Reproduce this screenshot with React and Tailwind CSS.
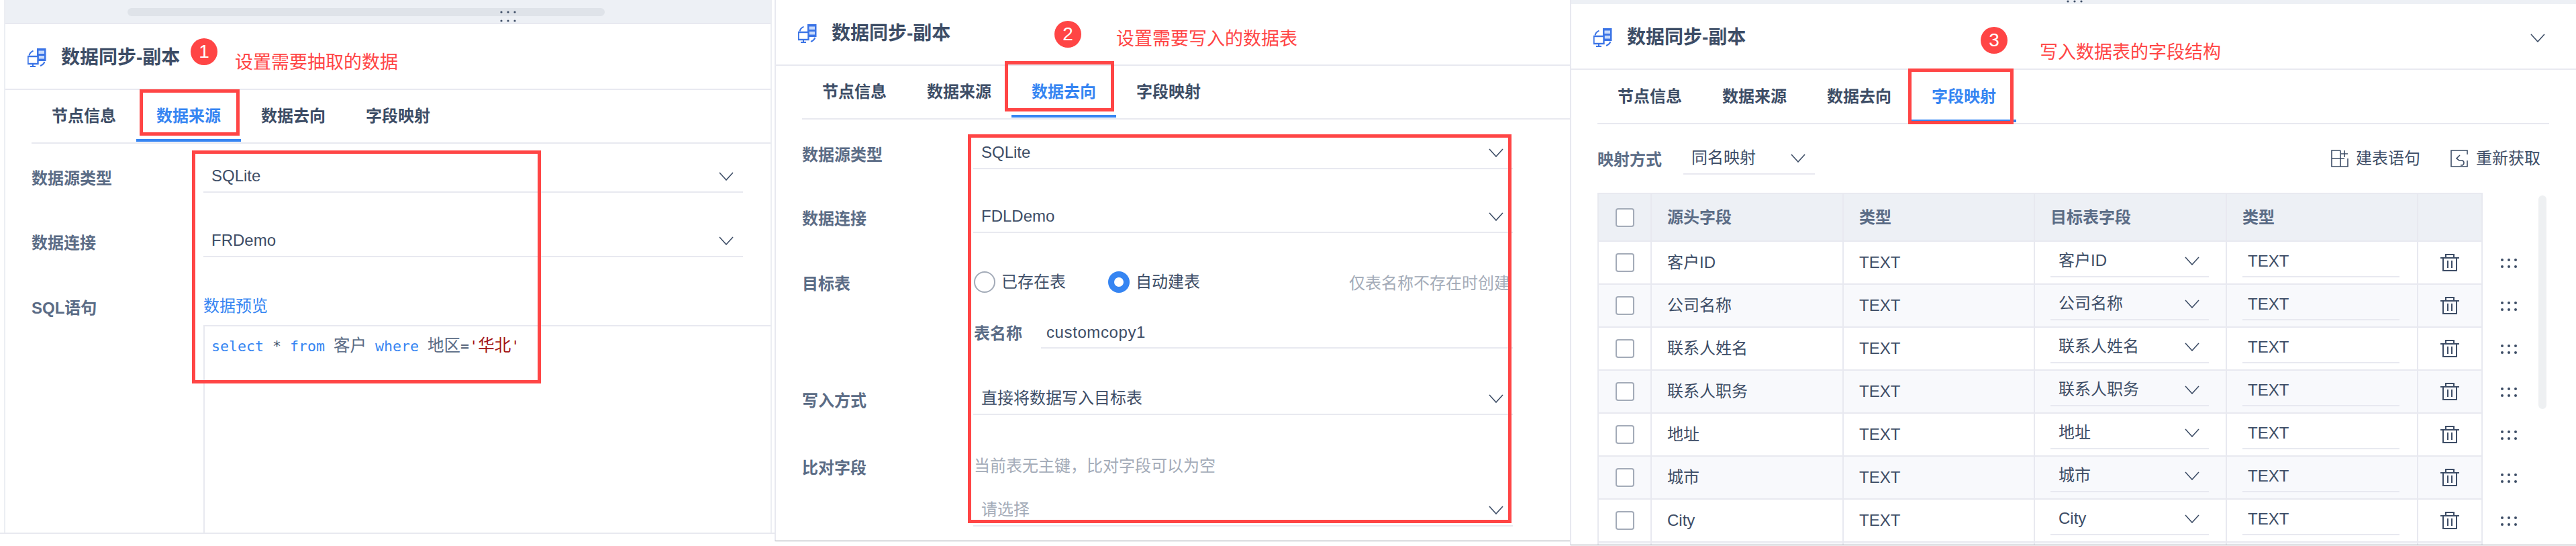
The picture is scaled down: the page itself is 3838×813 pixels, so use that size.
import React from 'react'

const TABS = ['节点信息', '数据来源', '数据去向', '字段映射']

const FIELDS = ['客户ID', '公司名称', '联系人姓名', '联系人职务', '地址', '城市', 'City']

function Chevron() {
  return (
    <svg width="22" height="13" viewBox="0 0 22 13" fill="none" stroke="#3d4d66" strokeWidth="1.6" className="shrink-0">
      <path d="M1 1l10 11L21 1" />
    </svg>
  )
}

function DbIcon() {
  return (
    <svg width="28" height="28" viewBox="0 0 28 28" fill="none" className="shrink-0">
      <path d="M2.5 10.5C3.2 7.5 5.4 5 8.5 3.6" stroke="#3b74e6" strokeWidth="2" />
      <path d="M25.5 20C24.3 22.8 22 25 19 26" stroke="#3b74e6" strokeWidth="2" />
      <rect x="14" y="0" width="13.5" height="19" fill="#3b74e6" />
      <rect x="16.5" y="3.5" width="8.5" height="4.5" fill="#c9dbfb" />
      <rect x="16.5" y="11" width="8.5" height="4.5" fill="#c9dbfb" />
      <rect x="0.5" y="12" width="15" height="11" fill="#fff" stroke="#3b74e6" strokeWidth="2.4" />
      <path d="M4 27h8M8 23v4" stroke="#3b74e6" strokeWidth="2" />
    </svg>
  )
}

function TrashIcon() {
  return (
    <svg width="28" height="26" viewBox="0 0 28 26" fill="none" stroke="#3d4d66" strokeWidth="2">
      <path d="M0 6h28M8 6V1h12v5M4 6v19h20V6M11 10v11M17 10v11" />
    </svg>
  )
}

function DragDots() {
  return (
    <svg width="26" height="14" viewBox="0 0 26 14" fill="#3d4d66" className="ml-[26px] shrink-0">
      <circle cx="3" cy="2" r="2" />
      <circle cx="13" cy="2" r="2" />
      <circle cx="23" cy="2" r="2" />
      <circle cx="3" cy="12" r="2" />
      <circle cx="13" cy="12" r="2" />
      <circle cx="23" cy="12" r="2" />
    </svg>
  )
}

function Grip({ className }) {
  return (
    <svg width="24" height="18" viewBox="0 0 24 18" fill="#3d4d66" className={className}>
      <circle cx="2" cy="2" r="1.6" />
      <circle cx="12" cy="2" r="1.6" />
      <circle cx="22" cy="2" r="1.6" />
      <circle cx="2" cy="15" r="1.6" />
      <circle cx="12" cy="15" r="1.6" />
      <circle cx="22" cy="15" r="1.6" />
    </svg>
  )
}

function Header({ chevron }) {
  return (
    <div className="flex h-[98px] shrink-0 items-center border-b-2 border-[#e8e9f0] pl-[33px] pr-[46px] pt-[4px]">
      <DbIcon />
      <span className="ml-[22px] text-[28px] font-bold leading-none text-[#3d4d66]">数据同步-副本</span>
      {chevron && (
        <span className="ml-auto">
          <Chevron />
        </span>
      )}
    </div>
  )
}

function Tabs({ active, className }) {
  return (
    <div className={`flex shrink-0 border-b-2 border-[#e8e9f0] ${className}`}>
      {TABS.map((t, i) => (
        <div
          key={t}
          className={`relative flex w-[156px] items-center justify-center text-[24px] font-bold leading-none ${
            i === active ? 'text-[#3685f2]' : 'text-[#3d4d66]'
          }`}
        >
          {t}
          {i === active && <span className="absolute bottom-[1px] left-0 h-[4px] w-full bg-[#3685f2]" />}
        </div>
      ))}
    </div>
  )
}

function Select({ value, className = '', placeholder }) {
  return (
    <div className={`flex h-[48px] shrink-0 items-center justify-between border-b-2 border-[#e8e9f0] pl-[12px] pr-[14px] text-[24px] leading-none ${placeholder ? 'text-[#a3abb8]' : 'text-[#3d4d66]'} ${className}`}>
      <span>{value}</span>
      <Chevron />
    </div>
  )
}

function Label({ children, className = 'w-[256px]' }) {
  return (
    <span className={`mt-[5px] shrink-0 text-[24px] font-bold leading-none text-[#5b6c86] ${className}`}>{children}</span>
  )
}

function Cjk({ children }) {
  return <span className="text-[24.5px] text-[#5b6c86]">{children}</span>
}

function SourcePanel() {
  return (
    <div className="h-[795px] w-[1154px] shrink-0 border-b-2 border-[#e8e9f0] pl-[6px] pr-[4px]">
      <div className="flex h-full flex-col border-l-2 border-r-2 border-[#eceef3]">
        <div className="relative flex h-[36px] shrink-0 items-start border-b-2 border-[#e8e9f0] bg-[#edf0f5] pl-[182px] pt-[12px]">
          <div className="h-[12px] w-[711px] rounded-full bg-[#dfe3e9]" />
          <Grip className="absolute left-[737px] top-[16px]" />
        </div>
        <Header />
        <Tabs active={1} className="ml-[39px] h-[80px]" />
        <div className="flex flex-1 flex-col pl-[39px]">
          <div className="mt-[25px] flex items-center">
            <Label>数据源类型</Label>
            <Select value="SQLite" className="w-[804px]" />
          </div>
          <div className="mt-[48px] flex items-center">
            <Label>数据连接</Label>
            <Select value="FRDemo" className="w-[804px]" />
          </div>
          <div className="mt-[56px] flex h-[34px] items-center">
            <Label>SQL语句</Label>
            <span className="text-[24px] leading-none text-[#3685f2]">数据预览</span>
          </div>
          <div className="ml-[256px] mt-[11px] flex-1 border-l-2 border-t-2 border-[#e8e9f0] pl-[10px] pt-[16px] font-['DejaVu_Sans_Mono','Noto_Sans_CJK_SC',monospace] text-[21.6px] leading-[26px] text-[#3d4d66]">
            <span className="text-[#3685f2]">select</span> * <span className="text-[#3685f2]">from</span> <Cjk>客户</Cjk> <span className="text-[#3685f2]">where</span> <Cjk>地区</Cjk>=<span className="text-[#a31515]">'<span className="text-[24.5px]">华北</span>'</span>
          </div>
        </div>
      </div>
    </div>
  )
}

function TargetPanel() {
  return (
    <div className="flex h-[806px] w-[1185px] shrink-0 flex-col border-b border-l-2 border-[#e8e9f0] border-b-[#8a8f99]">
      <Header />
      <Tabs active={2} className="ml-[39px] h-[80px]" />
      <div className="flex flex-col pl-[39px]">
        <div className="mt-[26px] flex items-center">
          <Label className="w-[255px]">数据源类型</Label>
          <Select value="SQLite" className="w-[804px]" />
        </div>
        <div className="mt-[47px] flex items-center">
          <Label className="w-[255px]">数据连接</Label>
          <Select value="FDLDemo" className="w-[804px]" />
        </div>
        <div className="mt-[56px] flex h-[34px] items-center">
          <Label className="w-[255px]">目标表</Label>
          <div className="flex w-[804px] items-center pr-[4px] text-[24px] leading-none text-[#3d4d66]">
            <span className="ml-[1px] h-[32px] w-[32px] rounded-full border-2 border-[#a3abb8]" />
            <span className="ml-[9px]">已存在表</span>
            <span className="ml-[63px] h-[32px] w-[32px] rounded-full border-[9px] border-[#3685f2]" />
            <span className="ml-[9px]">自动建表</span>
            <span className="ml-auto mt-[4px] text-[#a3abb8]">仅表名称不存在时创建</span>
          </div>
        </div>
        <div className="ml-[255px] mt-[34px] flex items-center">
          <span className="mt-[4px] w-[101px] shrink-0 pl-[1px] text-[24px] font-bold leading-none text-[#5b6c86]">表名称</span>
          <div className="flex h-[48px] w-[703px] items-center border-b-2 border-[#e8e9f0] pl-[8px] pt-[2px] text-[24px] leading-none tracking-[0.6px] text-[#3d4d66]">customcopy1</div>
        </div>
        <div className="mt-[51px] flex items-center">
          <Label className="w-[255px]">写入方式</Label>
          <Select value="直接将数据写入目标表" className="w-[804px]" />
        </div>
        <div className="mt-[59px] flex h-[34px] items-center">
          <Label className="w-[255px]">比对字段</Label>
          <span className="pl-[1px] text-[24px] leading-none text-[#a3abb8]">当前表无主键，比对字段可以为空</span>
        </div>
        <Select value="请选择" placeholder className="ml-[255px] mt-[25px] w-[804px]" />
      </div>
    </div>
  )
}

function Cell({ children, className = '' }) {
  return (
    <div className={`flex min-w-0 items-center border-r-2 border-[#e8e9f0] ${className}`}>{children}</div>
  )
}

function Checkbox() {
  return <span className="h-[28px] w-[28px] rounded-[4px] border-2 border-[#a3abb8] bg-white" />
}

function MappingTable() {
  return (
    <div className="mt-[28px] flex flex-col">
      <div className="grid h-[73px] w-[1319px] shrink-0 grid-cols-[79px_286px_285px_286px_285px_96px] border-b-2 border-l-2 border-t-2 border-[#e8e9f0] bg-[#edf0f5] text-[24px] font-bold leading-none text-[#5b6c86]">
        <Cell className="justify-center"><Checkbox /></Cell>
        <Cell className="pl-[23px]">源头字段</Cell>
        <Cell className="pl-[23px]">类型</Cell>
        <Cell className="pl-[23px]">目标表字段</Cell>
        <Cell className="pl-[23px]">类型</Cell>
        <Cell />
      </div>
      {FIELDS.map((f, i) => (
        <div key={f} className="flex h-[64px] shrink-0 items-center">
          <div className={`grid h-full w-[1319px] shrink-0 grid-cols-[79px_286px_285px_286px_285px_96px] border-b-2 border-l-2 border-[#e8e9f0] text-[24px] leading-none text-[#3d4d66] ${i % 2 ? 'bg-[#f8f9fc]' : 'bg-white'}`}>
            <Cell className="justify-center"><Checkbox /></Cell>
            <Cell className="pl-[23px]">{f}</Cell>
            <Cell className="pl-[23px]">TEXT</Cell>
            <Cell className="pl-[23px]">
              <Select value={f} className="mb-[4px] w-[236px]" />
            </Cell>
            <Cell className="pl-[23px]">
              <div className="mb-[4px] flex h-[48px] w-[234px] items-center border-b-2 border-[#e8e9f0] pl-[8px] pt-[2px]">TEXT</div>
            </Cell>
            <Cell className="justify-center"><TrashIcon /></Cell>
          </div>
          <DragDots />
        </div>
      ))}
      {/* next row is cut by the bottom of the screenshot */}
      <div className="grid h-[64px] w-[1319px] shrink-0 grid-cols-[79px_286px_285px_286px_285px_96px] border-l-2 border-[#e8e9f0] bg-[#f8f9fc]">
        <Cell />
        <Cell />
        <Cell />
        <Cell />
        <Cell />
        <Cell />
      </div>
    </div>
  )
}

function MappingPanel() {
  return (
    <div className="relative flex h-[812px] flex-1 flex-col overflow-hidden border-b border-l-2 border-[#e8e9f0] border-b-[#8a8f99]">
      <div className="relative h-[6px] shrink-0 overflow-hidden bg-[#edf0f5]">
        <Grip className="absolute left-[738px] top-0" />
      </div>
      <Header chevron />
      <Tabs active={3} className="ml-[39px] mr-[40px] h-[81px]" />
      <div className="ml-[39px] mr-[53px] mt-[28px] flex h-[46px] shrink-0 items-center justify-between text-[24px] leading-none text-[#3d4d66]">
        <div className="flex items-center">
          <span className="w-[128px] pt-[4px] font-bold text-[#5b6c86]">映射方式</span>
          <Select value="同名映射" className="w-[196px]" />
        </div>
        <div className="flex items-center">
          <svg width="26" height="26" viewBox="0 0 26 26" fill="none" stroke="#3d4d66" strokeWidth="1.6">
            <path d="M14 1H1v24h24V13M1 13h13M14 1v24M14 13h6M20 1v10M15 6h10" />
          </svg>
          <span className="ml-[11px]">建表语句</span>
          <svg width="26" height="26" viewBox="0 0 26 26" fill="none" stroke="#3d4d66" strokeWidth="1.6" className="ml-[45px]">
            <path d="M25 7V1H1v24h24v-9M14 8l-5 5 4 3h5a4 4 0 0 1 0 7h-3" />
          </svg>
          <span className="ml-[12px]">重新获取</span>
        </div>
      </div>
      <div className="ml-[39px]">
        <MappingTable />
      </div>
      <div className="absolute left-[1441px] top-[291px] h-[318px] w-[12px] rounded-full bg-[#eef0f2]" />
    </div>
  )
}

// the red markup drawn over the three stitched screenshots
function Annotation({ n, badgeClass, text, textClass, boxes }) {
  return (
    <>
      <span className={`absolute flex h-[40px] w-[40px] items-center justify-center rounded-full bg-[#ff4545] text-[28px] leading-none text-white ${badgeClass}`}>{n}</span>
      <span className={`absolute text-[27px] leading-none text-[#ff4545] ${textClass}`}>{text}</span>
      {boxes.map((b) => (
        <span key={b} className={`absolute border-[5px] border-[#ff4545] ${b}`} />
      ))}
    </>
  )
}

export default function App() {
  return (
    <div className="relative flex h-[813px] w-[3838px] items-start overflow-hidden bg-white font-['Liberation_Sans','Noto_Sans_CJK_SC',sans-serif]">
      <SourcePanel />
      <TargetPanel />
      <MappingPanel />
      <Annotation
        n="1"
        badgeClass="left-[284px] top-[57px]"
        text="设置需要抽取的数据"
        textClass="left-[350px] top-[80px]"
        boxes={['left-[208px] top-[133px] h-[69px] w-[149px]', 'left-[286px] top-[224px] h-[347px] w-[520px]']}
      />
      <Annotation
        n="2"
        badgeClass="left-[1571px] top-[31px]"
        text="设置需要写入的数据表"
        textClass="left-[1663px] top-[45px]"
        boxes={['left-[1497px] top-[91px] h-[75px] w-[163px]', 'left-[1442px] top-[200px] h-[579px] w-[810px]']}
      />
      <Annotation
        n="3"
        badgeClass="left-[2951px] top-[40px]"
        text="写入数据表的字段结构"
        textClass="left-[3039px] top-[65px]"
        boxes={['left-[2843px] top-[102px] h-[83px] w-[157px]']}
      />
    </div>
  )
}
